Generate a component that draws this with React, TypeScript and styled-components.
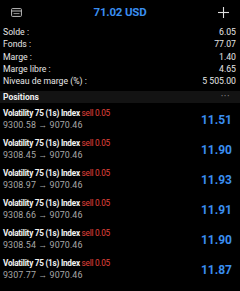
import * as React from "react";
import styled, { createGlobalStyle } from "styled-components";

const GlobalStyles = createGlobalStyle`
  html, body {
    margin: 0;
    padding: 0;
    background: #000;
  }
  body {
    font-family: Roboto, "Liberation Sans", sans-serif;
    color: #e8e8e8;
  }
`;

const summary = [
  { label: "Solde :", value: "6.05" },
  { label: "Fonds :", value: "77.07" },
  { label: "Marge :", value: "1.40" },
  { label: "Marge libre :", value: "4.65" },
  { label: "Niveau de marge (%) :", value: "5 505.00" },
];

const positions = [
  { open: "9300.58", current: "9070.46", profit: "11.51" },
  { open: "9308.45", current: "9070.46", profit: "11.90" },
  { open: "9308.97", current: "9070.46", profit: "11.93" },
  { open: "9308.66", current: "9070.46", profit: "11.91" },
  { open: "9308.54", current: "9070.46", profit: "11.90" },
  { open: "9307.77", current: "9070.46", profit: "11.87" },
];

const WalletIcon = () => (
  <svg width="11" height="9" viewBox="0 0 11 9" fill="none">
    <rect x="0.6" y="0.6" width="9.8" height="7.8" rx="0.8" stroke="#bdbdbd" strokeWidth="1" />
    <line x1="0.6" y1="3" x2="10.4" y2="3" stroke="#bdbdbd" strokeWidth="1" />
    <line x1="2.5" y1="5.6" x2="8.5" y2="5.6" stroke="#bdbdbd" strokeWidth="0.8" />
  </svg>
);

const PlusIcon = () => (
  <svg width="11" height="11" viewBox="0 0 11 11">
    <line x1="5.5" y1="0" x2="5.5" y2="11" stroke="#e0e0e0" strokeWidth="1.1" />
    <line x1="0" y1="5.5" x2="11" y2="5.5" stroke="#e0e0e0" strokeWidth="1.1" />
  </svg>
);

export default function App() {
  return (
    <Screen>
      <GlobalStyles />
      <Header>
        <IconSlot>
          <WalletIcon />
        </IconSlot>
        <Title>71.02 USD</Title>
        <IconSlot $right>
          <PlusIcon />
        </IconSlot>
      </Header>
      <Summary>
        {summary.map((row) => (
          <SummaryRow key={row.label}>
            <span>{row.label}</span>
            <span>{row.value}</span>
          </SummaryRow>
        ))}
      </Summary>
      <SectionBar>
        <SectionTitle>Positions</SectionTitle>
        <Dots>···</Dots>
      </SectionBar>
      {positions.map((p, i) => (
        <PositionRow key={i}>
          <PositionInfo>
            <Symbol>
              Volatility 75 (1s) Index <Side>sell 0.05</Side>
            </Symbol>
            <Prices>
              {p.open} → {p.current}
            </Prices>
          </PositionInfo>
          <Profit>{p.profit}</Profit>
        </PositionRow>
      ))}
    </Screen>
  );
}

const Screen = styled.div`
  width: 240px;
  min-height: 291px;
  background: #000;
  overflow: hidden;
`;

const Header = styled.div`
  height: 24px;
  display: flex;
  align-items: center;
  justify-content: space-between;
  padding: 0 11px;
`;

const IconSlot = styled.div<{ $right?: boolean }>`
  width: 20px;
  display: flex;
  justify-content: ${(p) => (p.$right ? "flex-end" : "flex-start")};
  align-items: center;
`;

const Title = styled.div`
  font-size: 11.5px;
  font-weight: 700;
  color: #3a8ef0;
  letter-spacing: -0.2px;
`;

const Summary = styled.div`
  padding: 2px 4px 0 3px;
`;

const SummaryRow = styled.div`
  height: 12.3px;
  display: flex;
  align-items: center;
  justify-content: space-between;
  font-size: 8.7px;
  color: #e6e6e6;
`;

const SectionBar = styled.div`
  margin-top: 3.5px;
  height: 12px;
  display: flex;
  align-items: center;
  justify-content: space-between;
  padding: 0 10px 0 3px;
  background: #131313;
`;

const SectionTitle = styled.span`
  font-size: 8.5px;
  font-weight: 700;
  color: #f0f0f0;
`;

const Dots = styled.span`
  font-size: 10px;
  color: #8a8a8a;
  letter-spacing: 0.5px;
`;

const PositionRow = styled.div`
  height: 30px;
  box-sizing: border-box;
  padding: 4px 8px 1px 3px;
  display: flex;
  align-items: center;
  justify-content: space-between;
`;

const PositionInfo = styled.div`
  display: flex;
  flex-direction: column;
`;

const Symbol = styled.div`
  height: 12px;
  line-height: 12px;
  font-size: 8.2px;
  font-weight: 700;
  color: #f2f2f2;
  letter-spacing: -0.25px;
`;

const Side = styled.span`
  font-weight: 400;
  color: #e2433c;
`;

const Prices = styled.div`
  height: 13px;
  line-height: 13px;
  font-size: 8.9px;
  color: #a8a8a8;
  letter-spacing: 0.1px;
`;

const Profit = styled.div`
  font-size: 12px;
  font-weight: 700;
  color: #3a8ef0;
  padding-top: 2px;
`;
